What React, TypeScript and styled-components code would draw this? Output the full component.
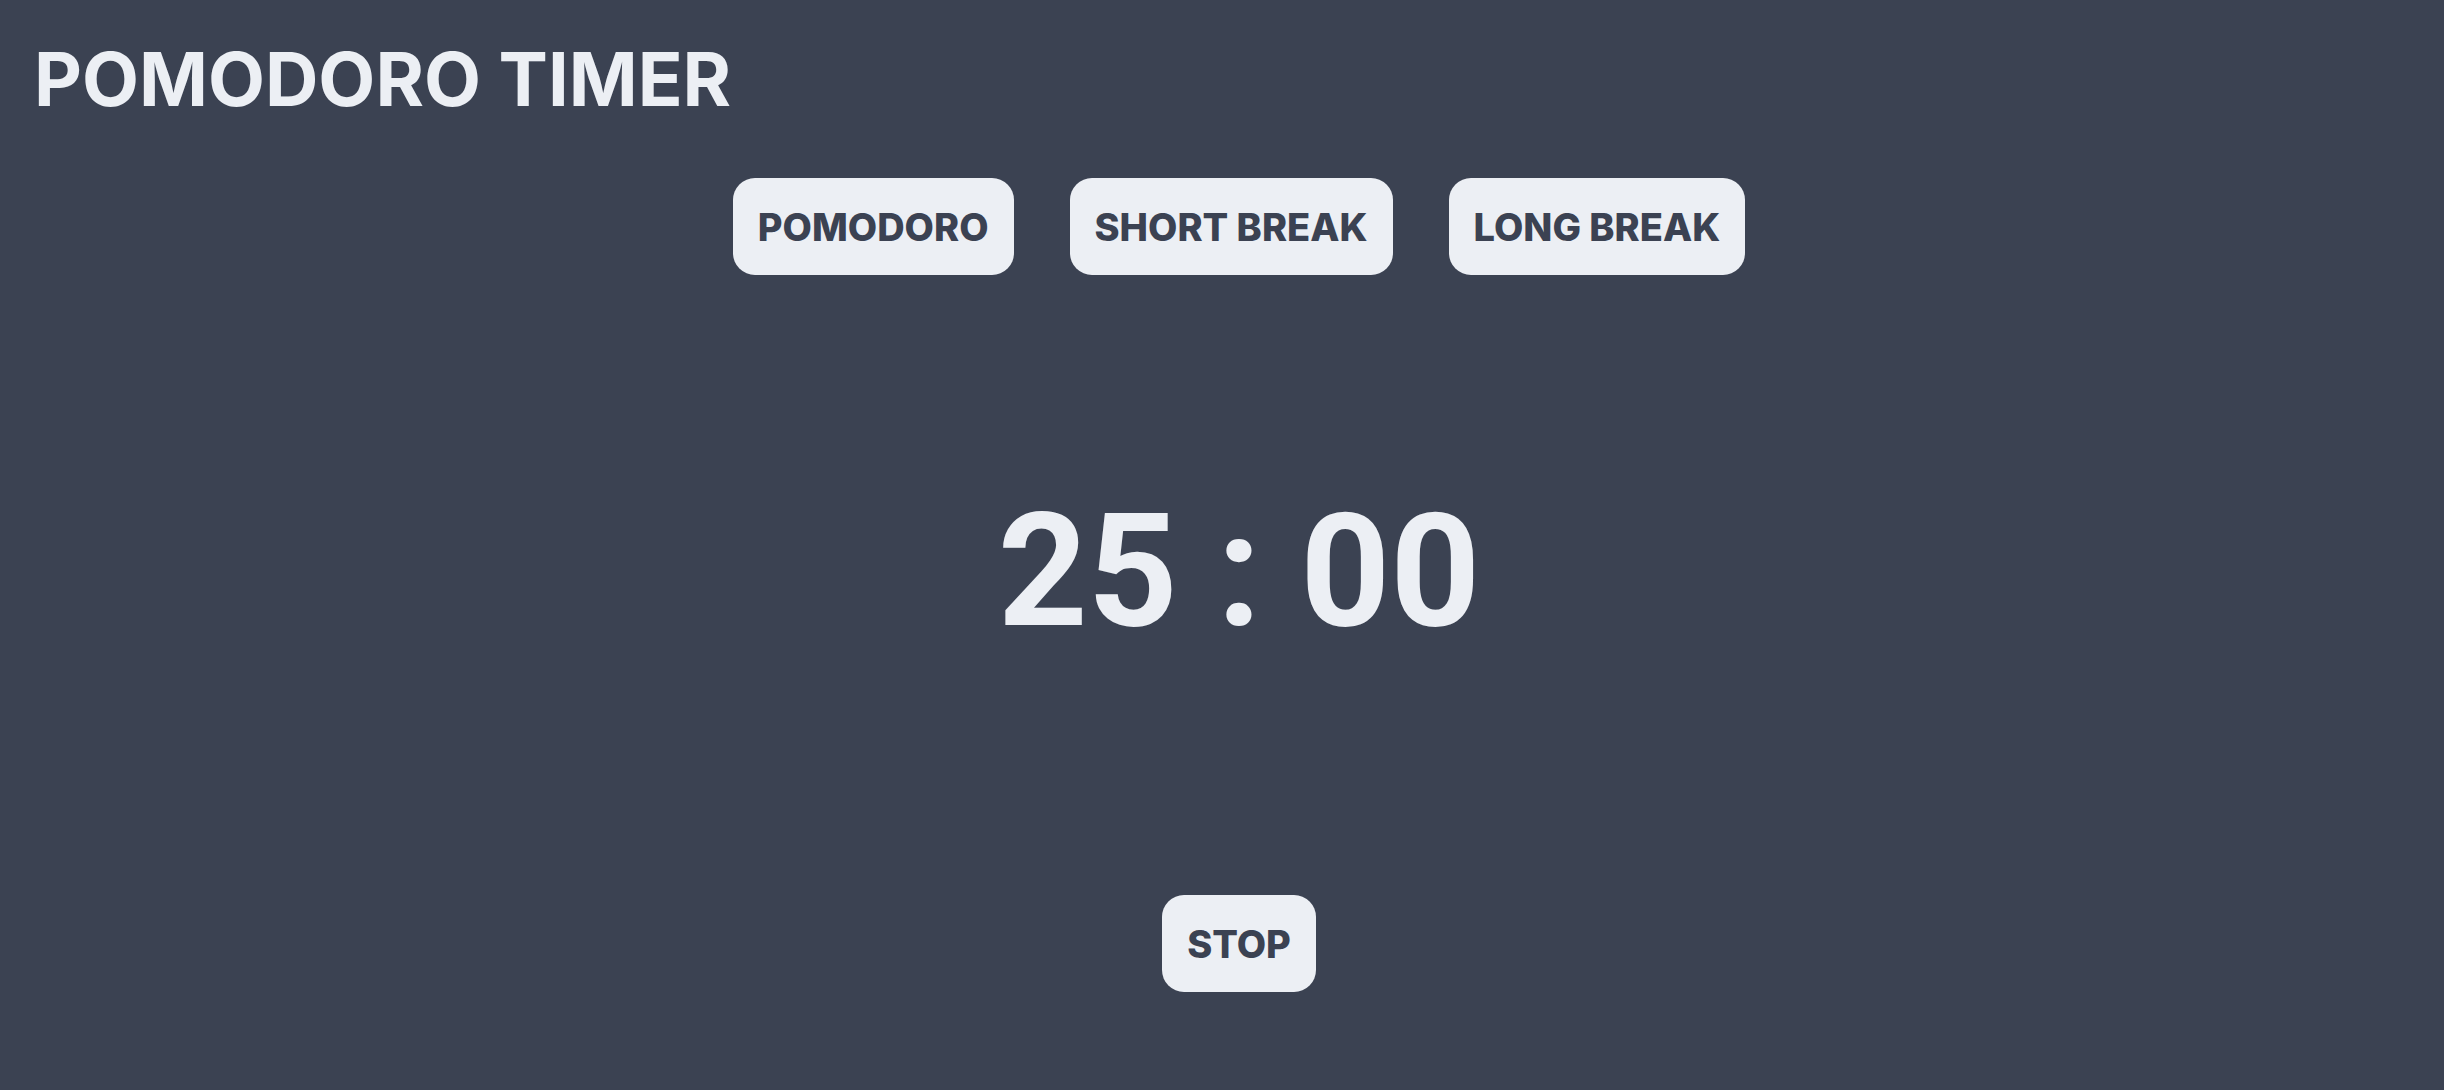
import React, { useState } from 'react';
import styled, { createGlobalStyle } from 'styled-components';

const GlobalStyle = createGlobalStyle`
  html, body {
    margin: 0;
    padding: 0;
    background: #3b4252;
  }
  * {
    box-sizing: border-box;
  }
`

const Page = styled.div`
  min-height: 100vh;
  background: #3b4252;
  color: #eceff4;
  font-family: Inter, "Liberation Sans", sans-serif;
  padding: 42px 0 0 34px;
  display: flex;
  flex-direction: column;
`

const Title = styled.h1`
  margin: 0;
  font-size: 74px;
  line-height: 1;
  font-weight: 700;
  color: #eceff4;
`

const Modes = styled.div`
  display: flex;
  justify-content: center;
  gap: 56px;
  margin-top: 62px;
`

const PillButton = styled.button`
  border: none;
  background: #eceff4;
  color: #3b4252;
  font-family: Inter, "Liberation Sans", sans-serif;
  font-weight: 800;
  font-size: 38px;
  line-height: 1;
  height: 97px;
  padding: 0 25px;
  border-radius: 22px;
  cursor: pointer;
`

const Clock = styled.div`
  margin-top: 218px;
  text-align: center;
  font-family: Roboto, "Liberation Sans", sans-serif;
  font-size: 157px;
  line-height: 1;
  font-weight: 700;
  color: #eceff4;
`

const Controls = styled.div`
  display: flex;
  justify-content: center;
  margin-top: 245px;
`

const modes = ['POMODORO', 'SHORT BREAK', 'LONG BREAK']

const App: React.FC = () => {
  const [mode, setMode] = useState('POMODORO')
  return (
    <Page>
      <GlobalStyle />
      <Title>POMODORO TIMER</Title>
      <Modes>
        {modes.map((m) => (
          <PillButton key={m} onClick={() => setMode(m)}>{m}</PillButton>
        ))}
      </Modes>
      <Clock>{mode === 'POMODORO' ? '25' : mode === 'SHORT BREAK' ? '05' : '15'} : 00</Clock>
      <Controls>
        <PillButton>STOP</PillButton>
      </Controls>
    </Page>
  )
}

export default App
